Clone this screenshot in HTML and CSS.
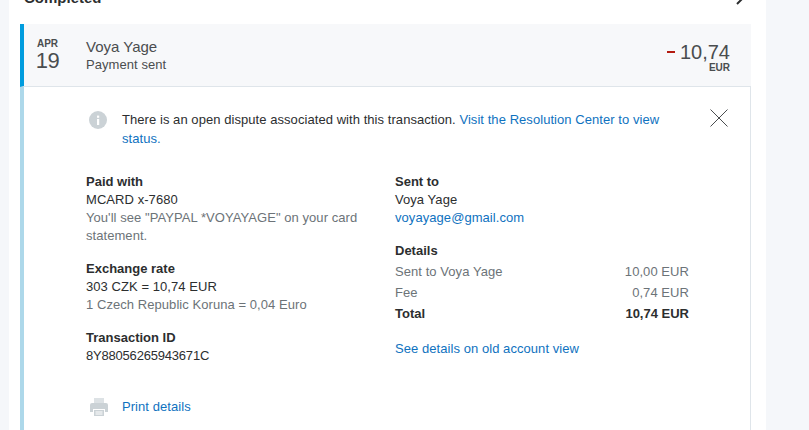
FILE: index.html
```html
<!DOCTYPE html>
<html lang="en">
<head>
  <meta charset="UTF-8" />
  <title>Activity</title>
  <link rel="stylesheet" href="styles.css">
</head>
<body>
  <div class="page">
    <div class="section-head">
      <h2>Completed</h2>
      <svg class="chevron" width="12" height="12" viewBox="0 0 12 12"><path d="M2 -7 L8 -1 L3 4" fill="none" stroke="#2c2e2f" stroke-width="2"/></svg>
    </div>

    <div class="txn">
      <div class="txn-head">
        <div class="date"><span class="month">APR</span><span class="day">19</span></div>
        <div class="who">
          <div class="name">Voya Yage</div>
          <div class="kind">Payment sent</div>
        </div>
        <div class="amount">
          <div class="sum"><span class="minus"></span>10,74</div>
          <div class="currency">EUR</div>
        </div>
      </div>

      <div class="txn-body">
        <div class="notice">
          <svg class="info" width="18" height="18" viewBox="0 0 18 18">
            <circle cx="9" cy="9" r="9" fill="#cbd2d6"/>
            <rect x="8" y="8" width="2.2" height="6" fill="#fff"/>
            <rect x="8" y="4.6" width="2.2" height="2.2" fill="#fff"/>
          </svg>
          <p>There is an open dispute associated with this transaction. <a href="#">Visit the Resolution Center to view status.</a></p>
          <svg class="close" width="18" height="18" viewBox="0 0 18 18"><path d="M0.5 0.5 L17.5 17.5 M17.5 0.5 L0.5 17.5" stroke="#4a4d4f" stroke-width="1" fill="none"/></svg>
        </div>

        <div class="columns">
          <div class="col">
            <div class="block">
              <h4>Paid with</h4>
              <div>MCARD x-7680</div>
              <div class="muted">You'll see "PAYPAL *VOYAYAGE" on your card statement.</div>
            </div>
            <div class="block">
              <h4>Exchange rate</h4>
              <div>303 CZK = 10,74 EUR</div>
              <div class="muted">1 Czech Republic Koruna = 0,04 Euro</div>
            </div>
            <div class="block">
              <h4>Transaction ID</h4>
              <div class="txn-id">8Y88056265943671C</div>
            </div>
          </div>
          <div class="col">
            <div class="block">
              <h4>Sent to</h4>
              <div>Voya Yage</div>
              <div><a href="#">voyayage@gmail.com</a></div>
            </div>
            <div class="block details">
              <h4>Details</h4>
              <div class="row muted"><span>Sent to Voya Yage</span><span>10,00 EUR</span></div>
              <div class="row muted"><span>Fee</span><span>0,74 EUR</span></div>
              <div class="row total"><span>Total</span><span>10,74 EUR</span></div>
            </div>
            <div class="block"><a href="#">See details on old account view</a></div>
          </div>
        </div>

        <div class="print">
          <svg width="18" height="18" viewBox="0 0 18 18">
            <path d="M4 0 H14 V5 H4 Z" fill="#dde2e5"/>
            <path d="M2 5 H16 Q18 5 18 7 V14 H15 V11 H3 V14 H0 V7 Q0 5 2 5 Z" fill="#cbd2d6"/>
            <path d="M4 12 H14 V18 H4 Z" fill="#cbd2d6"/>
            <path d="M5.5 14 H12.5 M5.5 16 H12.5" stroke="#fff" stroke-width="1"/>
          </svg>
          <a href="#">Print details</a>
        </div>
      </div>
    </div>
  </div>
</body>
</html>
```

FILE: styles.css
```css
html, body {
  margin: 0;
  height: 430px;
  overflow: hidden;
}
body {
  font-family: "Liberation Sans", sans-serif;
  font-size: 13px;
  letter-spacing: 0.06px;
  line-height: 18px;
  color: #2c2e2f;
  background: #f5f7fa;
}
a {
  color: #0f72c0;
  text-decoration: none;
}
.page {
  width: 731px;
  height: 430px;
  margin-left: 9px;
  padding: 0 15px 0 11px;
  background: #fff;
}
.section-head {
  display: flex;
  justify-content: space-between;
  align-items: flex-start;
  height: 24px;
  padding-right: 5px;
}
.section-head h2 {
  margin: -12px 0 0 4px;
  font-size: 15px;
  line-height: 20px;
  font-weight: bold;
  letter-spacing: 0;
}
.chevron {
  overflow: visible;
}

.txn {
  border-left: 4px solid #add8ea;
}
.txn-head {
  display: flex;
  align-items: flex-start;
  height: 62px;
  margin-left: -4px;
  border-left: 4px solid #009cde;
  border-bottom: 1px solid #dfe5ea;
  background: #f7f8fa;
}
.date {
  width: 47px;
  padding-top: 14px;
  text-align: center;
  color: #4a4d4f;
}
.date .month {
  display: block;
  font-size: 10px;
  line-height: 12px;
  font-weight: bold;
  letter-spacing: 0;
}
.date .day {
  display: block;
  font-size: 22px;
  line-height: 22px;
  letter-spacing: -0.5px;
}
.who {
  flex: 1;
  padding: 13px 0 0 15px;
}
.name {
  font-size: 15px;
  line-height: 20px;
  letter-spacing: 0;
  color: #4a4d4f;
}
.kind {
  line-height: 16px;
  color: #4a4d4f;
}
.amount {
  padding: 16px 21px 0 0;
  text-align: right;
}
.sum {
  display: flex;
  align-items: center;
  font-size: 20px;
  line-height: 24px;
  letter-spacing: 0;
  color: #4a4d4f;
}
.minus {
  width: 8px;
  height: 2px;
  margin-right: 5px;
  background: #b31b10;
}
.currency {
  margin-top: -1px;
  font-size: 10px;
  line-height: 10px;
  font-weight: bold;
  letter-spacing: 0;
  color: #4a4d4f;
}

.txn-body {
  padding: 24px 0 0 62px;
  border-right: 1px solid #dfe5ea;
  height: 320px;
}
.notice {
  display: flex;
  align-items: flex-start;
  position: relative;
  margin-bottom: 25px;
}
.notice p {
  width: 550px;
  margin: 0;
  line-height: 18.5px;
}
.info {
  margin: 0 15px 0 3px;
  flex-shrink: 0;
}
.close {
  position: absolute;
  right: 22px;
  top: -2px;
}
.columns {
  display: flex;
  gap: 29px;
}
.col {
  width: 280px;
}
.col:last-child {
  width: 294px;
}
.block {
  margin-bottom: 15px;
}
.block h4 {
  margin: 0;
  font-size: 13px;
  font-weight: bold;
  letter-spacing: 0;
}
.details {
  margin-bottom: 16px;
}
.details h4 {
  margin-bottom: 1px;
}
.txn-id {
  letter-spacing: -0.2px;
}
.muted {
  color: #6c7378;
}
.row {
  display: flex;
  justify-content: space-between;
  line-height: 21px;
}
.total {
  font-weight: bold;
  letter-spacing: 0;
}
.print {
  display: flex;
  align-items: center;
  gap: 14px;
  margin: 18px 0 0 4px;
}
```
